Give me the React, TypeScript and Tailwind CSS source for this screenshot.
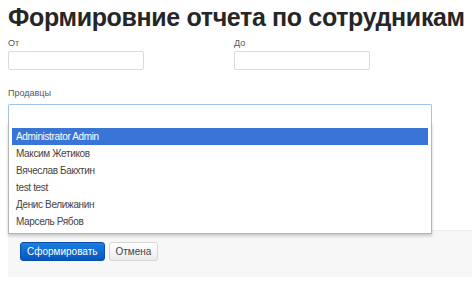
const sellers = [
  "Administrator Admin",
  "Максим Жетиков",
  "Вячеслав Бакхтин",
  "test test",
  "Денис Велижанин",
  "Марсель Рябов",
];

export default function App() {
  return (
    <div className="w-[472px] h-[285px] bg-white overflow-hidden font-['Liberation_Sans',Arial,sans-serif] text-[#333]">
      <h1 className="pl-[8px] pt-[2px] text-[25px] leading-[30px] tracking-[-0.35px] font-bold text-[#262626] whitespace-nowrap">
        Формировние отчета по сотрудникам
      </h1>

      {/* date range */}
      <div className="flex px-[8px] mt-[5px]">
        <div className="w-[226px]">
          <div className="text-[9px] leading-[12px] text-[#555]">От</div>
          <div className="mt-[2px] w-[136px] h-[19px] border border-[#dcdcdc] rounded-[2px] bg-white" />
        </div>
        <div>
          <div className="text-[9px] leading-[12px] text-[#555]">До</div>
          <div className="mt-[2px] w-[136px] h-[19px] border border-[#dcdcdc] rounded-[2px] bg-white" />
        </div>
      </div>

      <div className="px-[8px] mt-[17px] text-[9px] leading-[12px] text-[#555]">Продавцы</div>

      <div className="relative">
        <div className="px-[8px] mt-[5px]">
          <div className="w-[424px] h-[18px] border border-[#9ec3ee] border-b-0 rounded-t-[2px] bg-white" />
        </div>
        {/* open dropdown */}
        <div className="absolute left-[8px] top-[18px] w-[424px] z-10 border border-[#b5b5b5] border-t-0 bg-white shadow-[0_2px_3px_rgba(0,0,0,0.2)] px-[3px] pt-[6px] pb-[3px]">
          {sellers.map((name, i) => (
            <div
              key={name}
              className={
                i === 0
                  ? "h-[17px] px-[4px] text-[10px] leading-[17px] tracking-[-0.35px] bg-[#3875d7] text-white"
                  : "h-[17px] px-[4px] text-[10px] leading-[17px] tracking-[-0.35px] text-[#444]"
              }
            >
              {name}
            </div>
          ))}
        </div>
        {/* form actions */}
        <div className="ml-[8px] mt-[108px] h-[47px] bg-[#f7f7f7] border-t border-[#ececec] pl-[12px] pt-[11px] flex gap-[4px]">
          <button className="h-[19px] px-[6px] rounded-[3px] text-[10px] leading-[17px] text-white bg-gradient-to-b from-[#1a7fe0] to-[#0a55c0] border border-[#0a4fae]">
            Сформировать
          </button>
          <button className="h-[19px] px-[6px] rounded-[3px] text-[10px] leading-[17px] text-[#444] bg-gradient-to-b from-white to-[#ececec] border border-[#d6d6d6]">
            Отмена
          </button>
        </div>
      </div>
    </div>
  );
}
